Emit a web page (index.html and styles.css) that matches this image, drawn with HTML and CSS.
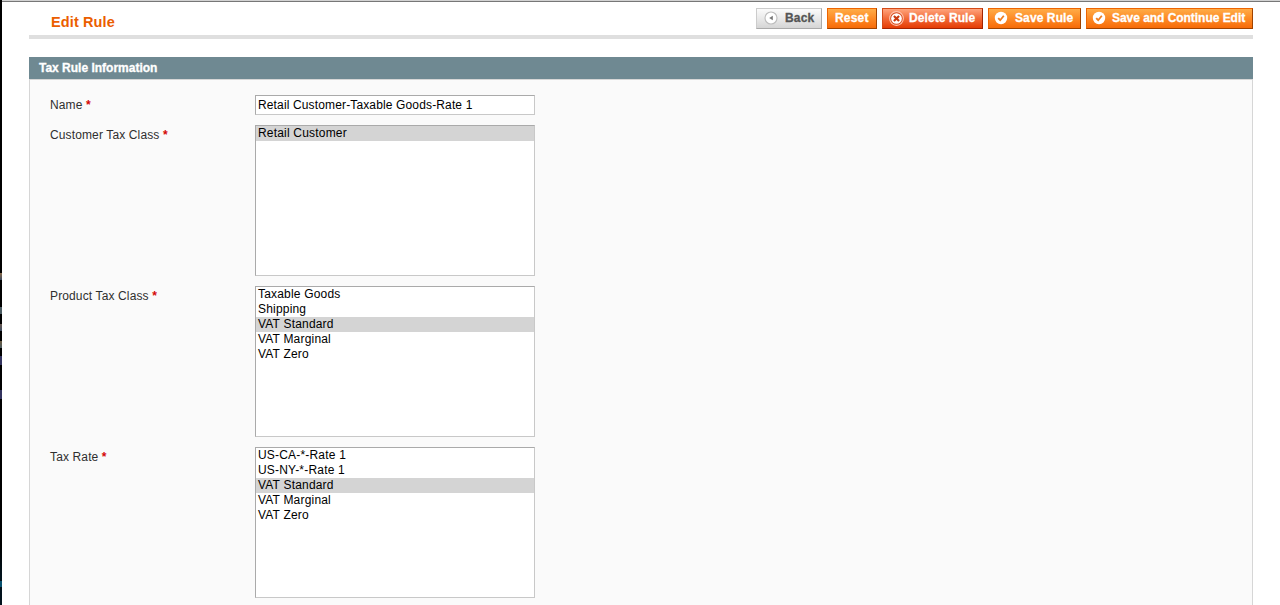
FILE: index.html
```html
<!DOCTYPE html>
<html lang="en">
<head>
<meta charset="utf-8">
<title>Edit Rule</title>
<link rel="stylesheet" href="styles.css">
</head>
<body>
<div class="edge"></div>
<main class="page">
  <header class="content-header">
    <h1 class="title">Edit Rule</h1>
    <div class="buttons">
      <button class="btn btn-back"><svg class="icon" viewBox="0 0 14 14"><circle cx="7" cy="7" r="6" fill="#fff" stroke="#bdbdbd" stroke-width="1.1"/><path d="M8.8 4.8v4.4L5.2 7z" fill="#777"/></svg><span>Back</span></button>
      <button class="btn btn-reset"><span>Reset</span></button>
      <button class="btn btn-delete"><svg class="icon" viewBox="0 0 14 14"><circle cx="7" cy="7" r="6.4" fill="#d94a1c" stroke="#ffc5ae" stroke-width="1"/><circle cx="7" cy="7" r="5" fill="#fff"/><path d="M4.6 4.6l4.8 4.8M9.4 4.6L4.6 9.4" stroke="#c83a10" stroke-width="2"/></svg><span>Delete Rule</span></button>
      <button class="btn btn-save"><svg class="icon" viewBox="0 0 14 14"><circle cx="7" cy="7" r="6.2" fill="#fff"/><path d="M4.2 7.1l2 2.1 3.6-4.4" fill="none" stroke="#ee7c20" stroke-width="1.8"/></svg><span>Save Rule</span></button>
      <button class="btn btn-continue"><svg class="icon" viewBox="0 0 14 14"><circle cx="7" cy="7" r="6.2" fill="#fff"/><path d="M4.2 7.1l2 2.1 3.6-4.4" fill="none" stroke="#ee7c20" stroke-width="1.8"/></svg><span>Save and Continue Edit</span></button>
    </div>
  </header>
  <h2 class="section-head"><span>Tax Rule Information</span></h2>
  <section class="fieldset">
    <div class="row"><label class="label">Name <b class="req">*</b></label><input class="text" value="Retail Customer-Taxable Goods-Rate 1"></div>
    <div class="row"><label class="label">Customer Tax Class <b class="req">*</b></label>
      <ul class="list"><li class="selected">Retail Customer</li></ul></div>
    <div class="row"><label class="label">Product Tax Class <b class="req">*</b></label>
      <ul class="list"><li>Taxable Goods</li><li>Shipping</li><li class="selected">VAT Standard</li><li>VAT Marginal</li><li>VAT Zero</li></ul></div>
    <div class="row"><label class="label">Tax Rate <b class="req">*</b></label>
      <ul class="list"><li>US-CA-*-Rate 1</li><li>US-NY-*-Rate 1</li><li class="selected">VAT Standard</li><li>VAT Marginal</li><li>VAT Zero</li></ul></div>
  </section>
</main>
</body>
</html>
```
FILE: styles.css
```css
* { box-sizing: border-box; }
body {
  margin: 0;
  height: 605px;
  overflow: hidden;
  display: flex;
  background: #fff;
  font-family: "Liberation Sans", Arial, sans-serif;
  font-size: 12px;
  color: #2f2f2f;
}
/* dark window edge with slivers of the window behind it */
.edge {
  width: 2px;
  flex: none;
  background:
    linear-gradient(#8a6a48, #3c4a60) 0 273px / 2px 7px no-repeat,
    linear-gradient(#4a5a60, #4a5a60) 0 307px / 2px 7px no-repeat,
    linear-gradient(#6a5a50, #3c4a60) 0 324px / 2px 7px no-repeat,
    linear-gradient(#6a5a40, #4a5a60) 0 341px / 2px 7px no-repeat,
    linear-gradient(#33335e, #33335e) 0 356px / 2px 9px no-repeat,
    linear-gradient(#33335e, #33335e) 0 390px / 2px 9px no-repeat,
    linear-gradient(#07506e, #07506e) 0 581px / 2px 6px no-repeat,
    linear-gradient(#000 0, #000 545px, #02121c 575px, #02121c 100%);
}
.page {
  flex: 1;
  padding: 0 27px;
  border-top: 1px solid #d2d2d2;
  box-shadow: inset 0 1px #777;
}
.content-header {
  display: flex;
  justify-content: space-between;
  height: 38px;
  padding: 7px 0 0 22px;
  border-bottom: 4px solid #dfdfdf;
}
.title {
  margin: 6px 0 0;
  font-size: 14.5px;
  line-height: 17px;
  letter-spacing: 0.12px;
  color: #eb5e00;
}
.buttons { display: flex; gap: 5px; }
.btn {
  display: flex;
  align-items: center;
  height: 21px;
  margin: 0;
  padding: 0 0 2px 7px;
  border: 1px solid;
  font: bold 12px/16px "Liberation Sans", Arial, sans-serif;
  color: #fff;
  white-space: nowrap;
  border-color: #ed6502 #a04300 #a04300 #ed6502;
  background: linear-gradient(#ffac47, #fd8a25 50%, #f76b08);
  -webkit-text-stroke: 0.3px;
}
.icon { width: 14px; height: 14px; flex: none; margin: 1px 6px 0 -2px; }
.btn-back {
  width: 66px;
  padding-left: 8px;
  letter-spacing: 0.2px;
  color: #555;
  border-color: #ccc #aaa #aaa #ccc;
  background: linear-gradient(#fbfbfb, #e9e9e9 50%, #d5d5d5);
}
.btn-back .icon { margin-right: 7px; margin-left: -1px; }
.btn-reset { width: 50px; letter-spacing: 0.2px; }
.btn-delete {
  width: 101px;
  letter-spacing: 0.08px;
  border-color: #d44a18 #a32402 #a32402 #d44a18;
  background: linear-gradient(#ffa47c, #f26a38 50%, #e53c04);
}
.btn-delete .icon { width: 15px; height: 15px; margin-right: 5px; margin-left: -1px; }
.btn-save { width: 93px; letter-spacing: 0.1px; }
.btn-save .icon { margin-right: 7px; }
.btn-continue { width: 167px; letter-spacing: -0.04px; }
.section-head {
  margin: 18px 0 0;
  height: 22px;
  padding-left: 10px;
  background: #6f8992;
  color: #fff;
  font-size: 12px;
  line-height: 22px;
  -webkit-text-stroke: 0.3px;
}
.fieldset {
  height: 540px;
  padding: 15px 20px;
  border: 1px solid #d6d6d6;
  background: #fafafa;
}
.row { display: flex; align-items: flex-start; margin-bottom: 10px; }
.label { width: 205px; padding-top: 2px; line-height: 16px; letter-spacing: 0.13px; }
.req { color: #d40707; }
.text, .list {
  width: 280px;
  margin: 0;
  border: 1px solid;
  border-color: #aaa #c8c8c8 #c8c8c8 #aaa;
  background: #fff;
  color: #000;
  font: 12px/15px "Liberation Sans", Arial, sans-serif;
  letter-spacing: 0.14px;
}
.text { height: 20px; padding: 0 2px; }
.list { height: 151px; padding: 0; list-style: none; letter-spacing: 0.19px; }
.list li { height: 15px; padding-left: 2px; }
.selected { background: #d4d4d4; }
```
